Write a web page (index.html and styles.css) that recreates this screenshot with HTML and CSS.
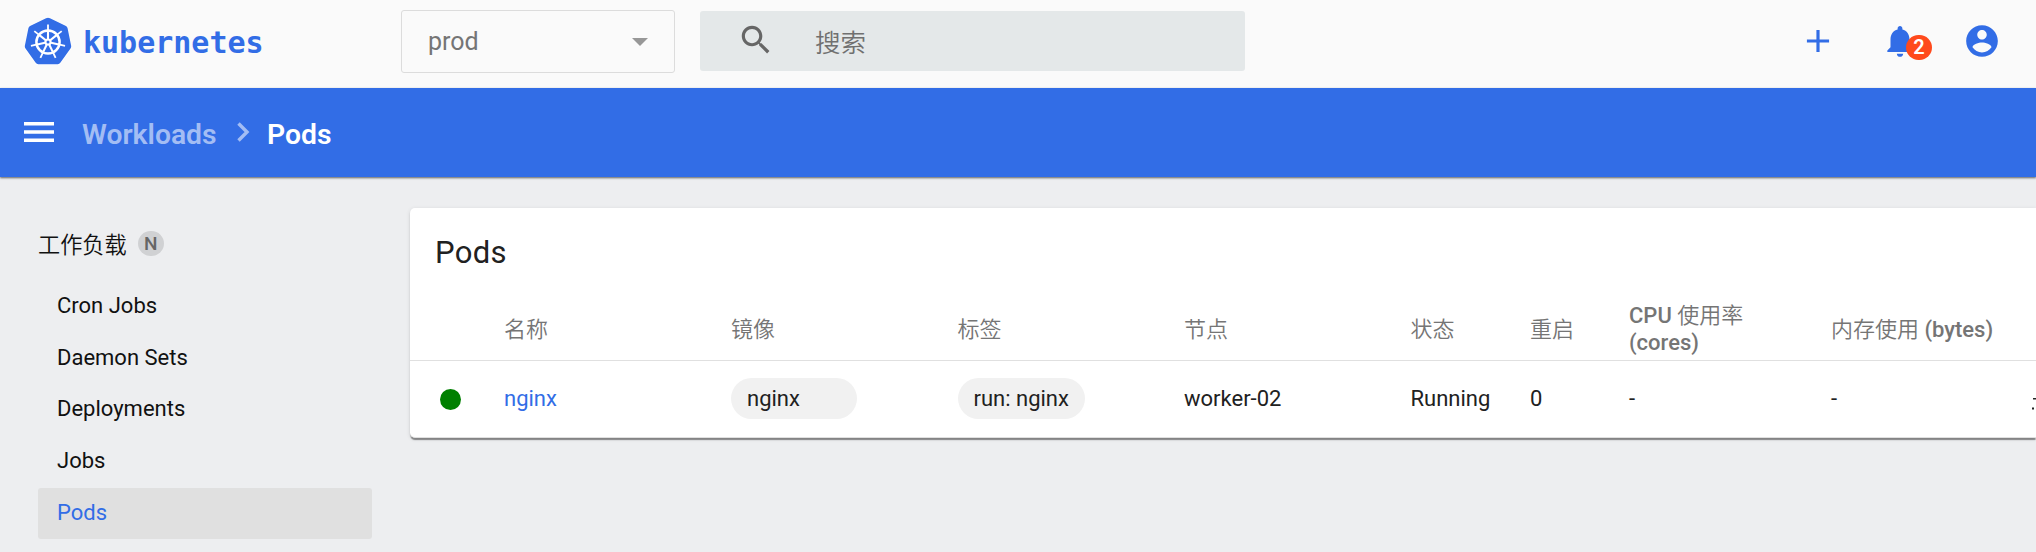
FILE: index.html
```html
<!DOCTYPE html>
<html lang="zh-CN">
<head>
<meta charset="utf-8">
<title>Kubernetes Dashboard</title>
<link rel="stylesheet" href="styles.css">
</head>
<body>
<header class="topbar">
  <div class="brand">
    <svg class="logo" viewBox="0 0 48 48">
      <path d="M24 0 43.500 9 48 31 35.500 48H12.500L0 31 4.500 9Z" fill="#fff"/>
      <path d="M24 .8Q25 .8 26 1.300L42 9Q43.300 9.700 43.600 11.200L47.200 29Q47.400 30.400 46.500 31.500L36.300 45.800Q35.300 47.200 33.800 47.200H14.200Q12.700 47.200 11.700 45.800L1.500 31.500Q.6 30.400 .8 29L4.400 11.200Q4.700 9.700 6 9L22 1.300Q23 .8 24 .8Z" fill="#326de6"/>
      <g fill="none" stroke="#fff">
        <circle cx="24" cy="25" r="11.600" stroke-width="2.500"/>
        <g stroke-width="2.100"><path id="s" d="M24 23V14"/><use href="#s" transform="rotate(51.430 24 25)"/><use href="#s" transform="rotate(102.860 24 25)"/><use href="#s" transform="rotate(154.290 24 25)"/><use href="#s" transform="rotate(205.710 24 25)"/><use href="#s" transform="rotate(257.140 24 25)"/><use href="#s" transform="rotate(308.570 24 25)"/></g>
        <g stroke-width="1.800"><path id="h" d="M24 14V7.500"/><use href="#h" transform="rotate(51.430 24 25)"/><use href="#h" transform="rotate(102.860 24 25)"/><use href="#h" transform="rotate(154.290 24 25)"/><use href="#h" transform="rotate(205.710 24 25)"/><use href="#h" transform="rotate(257.140 24 25)"/><use href="#h" transform="rotate(308.570 24 25)"/></g>
      </g>
      <circle cx="24" cy="25" r="3.600" fill="#fff"/><circle cx="24" cy="25" r="1.500" fill="#326de6"/>
    </svg>
    <span class="wordmark">kubernetes</span>
  </div>
  <div class="namespace"><span>prod</span><svg width="16" height="8" viewBox="0 0 16 8"><path d="M0 0H16L8 8Z" fill="#979797"/></svg></div>
  <div class="search">
    <svg class="icon" viewBox="0 0 24 24" fill="#666"><path d="M15.500 14h-.79l-.28-.27C15.410 12.590 16 11.110 16 9.500 16 5.910 13.090 3 9.500 3S3 5.910 3 9.500 5.910 16 9.500 16c1.610 0 3.090-.59 4.230-1.570l.27.28v.79l5 4.990L20.490 19l-4.990-5zm-6 0C7.010 14 5 11.990 5 9.500S7.010 5 9.500 5 14 7.010 14 9.500 11.990 14 9.500 14z"/></svg>
    <span>搜索</span>
  </div>
  <div class="actions">
    <svg class="icon" viewBox="0 0 24 24"><path d="M19 13h-6v6h-2v-6H5v-2h6V5h2v6h6v2z"/></svg>
    <div class="bell">
      <svg class="icon" viewBox="0 0 24 24"><path d="M12 22c1.100 0 2-.9 2-2h-4c0 1.100.89 2 2 2zm6-6v-5c0-3.070-1.640-5.640-4.500-6.320V4c0-.83-.67-1.500-1.500-1.500s-1.500.67-1.500 1.500v.68C7.630 5.360 6 7.920 6 11v5l-2 2v1h16v-1l-2-2z"/></svg>
      <span class="badge">2</span>
    </div>
    <svg class="icon" viewBox="0 0 24 24"><path d="M12 2C6.480 2 2 6.480 2 12s4.480 10 10 10 10-4.480 10-10S17.520 2 12 2zm0 3c1.660 0 3 1.340 3 3s-1.340 3-3 3-3-1.340-3-3 1.340-3 3-3zm0 14.200c-2.500 0-4.710-1.280-6-3.220.03-1.990 4-3.080 6-3.080 1.990 0 5.970 1.090 6 3.080-1.290 1.940-3.500 3.220-6 3.220z"/></svg>
  </div>
</header>
<nav class="crumbs">
  <svg class="menu" width="30" height="20" viewBox="0 0 30 20" fill="#fff"><path d="M0 0H30V3.500H0ZM0 8.200H30V11.700H0ZM0 16.400H30V19.900H0Z"/></svg>
  <span class="parent">Workloads</span>
  <svg class="chevron" width="13" height="20" viewBox="0 0 13 20" fill="none" stroke="#a3bdf4" stroke-width="3.400"><path d="M1.500 1.500 10 10 1.500 18.500"/></svg>
  <span class="current">Pods</span>
</nav>
<main class="page">
  <aside class="side">
    <div class="group"><span>工作负载</span><span class="tag">N</span></div>
    <a class="item">Cron Jobs</a>
    <a class="item">Daemon Sets</a>
    <a class="item">Deployments</a>
    <a class="item">Jobs</a>
    <a class="item active">Pods</a>
  </aside>
  <section class="card">
    <h2 class="title">Pods</h2>
    <div class="row head">
      <span></span><span>名称</span><span>镜像</span><span>标签</span><span>节点</span><span>状态</span><span>重启</span><span class="cpu"><b>CPU</b> 使用率 <b>(cores)</b></span><span>内存使用 <b>(bytes)</b></span>
    </div>
    <div class="row data">
      <span class="dot"></span><span class="link">nginx</span><span><span class="chip image">nginx</span></span><span><span class="chip">run: nginx</span></span><span>worker-02</span><span>Running</span><span>0</span><span>-</span><span>-</span>
      <svg class="cut" width="4" height="12" viewBox="0 0 4 12" fill="#222"><path d="M1 0H4V1.500H1ZM0 9.500H2V11.500H0Z"/></svg>
    </div>
  </section>
</main>
</body>
</html>
```
FILE: styles.css
```css
* { box-sizing: border-box; }
body {
  margin: 0;
  height: 552px;
  overflow: hidden;
  background: #edeef0;
  font: 22px/28px Roboto, "Noto Sans CJK SC", sans-serif;
  color: #111;
}
svg { display: block; flex: none; }
.topbar {
  display: flex;
  align-items: flex-start;
  height: 88px;
  background: #fafafa;
}
.brand { display: flex; width: 401px; padding: 17px 0 0 24px; }
.logo { width: 48px; height: 48px; }
.wordmark {
  margin: 6px 0 0 11px;
  font: bold 30px/40px "DejaVu Sans Mono", monospace;
  color: #326de6;
}
.namespace {
  display: flex;
  align-items: center;
  justify-content: space-between;
  width: 274px;
  height: 63px;
  margin-top: 10px;
  padding: 0 26px;
  border: 1px solid #dcdcdc;
  border-radius: 3px;
  font-size: 25px;
  color: #757575;
}
.search {
  display: flex;
  align-items: center;
  width: 545px;
  height: 60px;
  margin: 11px 0 0 25px;
  padding-left: 37px;
  border-radius: 3px;
  background: #e4e8e9;
  font-size: 25.500px;
  font-weight: 350;
  color: #707070;
}
.search .icon { margin: -2px 40px 0 0; }
.search span { padding-top: 3px; }
.icon { width: 38px; height: 38px; }
.actions {
  display: flex;
  gap: 44px;
  margin: 22px 35px 0 auto;
  fill: #326de6;
}
.bell { position: relative; }
.badge {
  position: absolute;
  left: 25px;
  top: 13px;
  width: 26px;
  height: 25px;
  border-radius: 13px;
  background: #ff4a1c;
  font-size: 20px;
  font-weight: 600;
  line-height: 25px;
  text-align: center;
  color: #fff;
}
.crumbs {
  position: relative;
  display: flex;
  align-items: center;
  height: 89px;
  padding: 3px 0 0 24px;
  background: #326de6;
  box-shadow: 0 1px 2px rgba(0, 0, 0, .6);
  font-size: 28.300px;
  font-weight: 600;
  color: #fff;
}
.crumbs span { padding-top: 2px; }
.menu { margin: -4px 28px 0 0; }
.parent { width: 155px; color: #a3bdf4; }
.chevron { margin-top: -4px; }
.current { margin-left: 17px; }
.page { display: flex; }
.side { width: 410px; padding: 53px 38px 0; }
.group {
  display: flex;
  align-items: center;
  height: 28px;
  margin-bottom: 22px;
  font-size: 22.200px;
  font-weight: 350;
}
.group span:first-child { padding-top: 2px; }
.tag {
  width: 26px;
  height: 25px;
  margin: -1px 0 0 11px;
  border-radius: 13px;
  background: #d0d1d3;
  font-size: 19px;
  font-weight: 500;
  line-height: 26px;
  text-align: center;
  color: #666;
}
.item {
  display: block;
  width: 334px;
  height: 51.700px;
  padding-left: 19px;
  line-height: 51px;
  border-radius: 3px;
}
.active { height: 51px; margin-top: 1px; line-height: 49px; background: #e0e0e0; color: #326de6; }
.card {
  width: 1626px;
  height: 230px;
  margin-top: 31px;
  flex: none;
  border-radius: 5px 0 0 5px;
  border-bottom: 1px solid #e0e0e0;
  background: #fff;
  box-shadow: 0 3px 1px -1px rgba(0, 0, 0, .25), 0 2px 1px rgba(0, 0, 0, .2), 0 1px 4px rgba(0, 0, 0, .12);
}
.title {
  margin: 0;
  padding: 30px 0 0 25px;
  font-size: 31px;
  font-weight: 400;
  line-height: 30px;
  letter-spacing: .3px;
  color: #212121;
}
.row {
  position: relative;
  display: grid;
  grid-template-columns: 94px 227px 226.500px 226.500px 226.500px 119.500px 99px 202px 1fr;
  align-items: center;
}
.head {
  height: 93px;
  padding-top: 30px;
  border-bottom: 1px solid #e0e0e0;
  font-weight: 350;
  line-height: 27px;
  color: #757575;
}
.head b { font-weight: 500; }
.cpu { width: 130px; }
.data { height: 76px; color: #212121; }
.dot { width: 21px; height: 21px; margin-left: 30px; border-radius: 50%; background: #008000; }
.link { color: #326de6; }
.chip {
  display: block;
  width: fit-content;
  height: 41px;
  margin-bottom: 2px;
  padding: 0 16px;
  border-radius: 21px;
  background: #f1f1f1;
  line-height: 41px;
}
.data .image { width: 126px; }
.cut { position: absolute; right: 0; top: 37px; }
```
